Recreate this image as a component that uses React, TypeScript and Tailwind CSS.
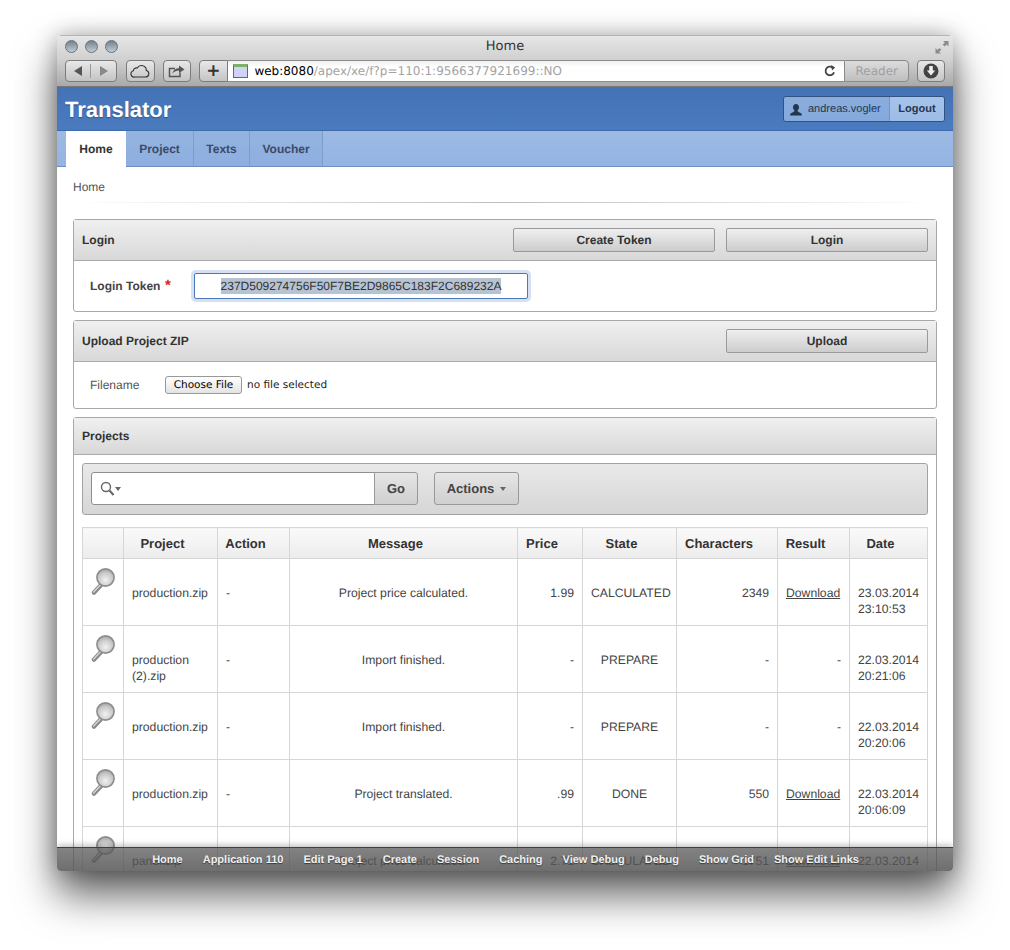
import React from "react";

const sans = "font-['Liberation_Sans',Arial,sans-serif]";
const lucida = "font-['DejaVu_Sans',sans-serif]";

function Mag() {
  return (
    <svg width="26" height="28" viewBox="0 0 26 28" className="block">
      <defs>
        <radialGradient id="lens" cx="50%" cy="65%" r="70%">
          <stop offset="0%" stopColor="#f2f2f2" />
          <stop offset="60%" stopColor="#c9c9c9" />
          <stop offset="100%" stopColor="#9a9a9a" />
        </radialGradient>
      </defs>
      <path d="M3 24.5 L10.5 16.5" stroke="#8a8a8a" strokeWidth="4.5" strokeLinecap="round" />
      <path d="M2.6 24 L10 16.2" stroke="#d4d4d4" strokeWidth="1.4" strokeLinecap="round" />
      <circle cx="14.5" cy="9.5" r="8.6" fill="url(#lens)" stroke="#8c8c8c" strokeWidth="1.6" />
    </svg>
  );
}

function Btn({ children }: { children: React.ReactNode }) {
  return (
    <div className="w-[202px] h-6 rounded-[2px] border border-[#9a9a9a] bg-gradient-to-b from-[#efefef] to-[#cdcdcd] flex items-center justify-center text-xs font-bold text-[#333]">
      {children}
    </div>
  );
}

function PanelHead({ title, h, children }: { title: string; h: string; children?: React.ReactNode }) {
  return (
    <div className={`${h} flex items-center justify-between pl-2 pr-2 border-b border-[#ababab] bg-gradient-to-b from-[#f0f0f0] to-[#d8d8d8]`}>
      <span className="text-xs font-bold text-[#333]">{title}</span>
      {children && <div className="flex gap-[11px]">{children}</div>}
    </div>
  );
}

type Row = {
  project: string;
  message: string;
  price: string;
  state: string;
  chars: string;
  result: string;
  date: string;
  time: string;
};

const rows: Row[] = [
  { project: "production.zip", message: "Project price calculated.", price: "1.99", state: "CALCULATED", chars: "2349", result: "Download", date: "23.03.2014", time: "23:10:53" },
  { project: "production (2).zip", message: "Import finished.", price: "-", state: "PREPARE", chars: "-", result: "-", date: "22.03.2014", time: "20:21:06" },
  { project: "production.zip", message: "Import finished.", price: "-", state: "PREPARE", chars: "-", result: "-", date: "22.03.2014", time: "20:20:06" },
  { project: "production.zip", message: "Project translated.", price: ".99", state: "DONE", chars: "550", result: "Download", date: "22.03.2014", time: "20:06:09" },
  { project: "panel.zip", message: "Project price calculated.", price: "2.71", state: "CALCULATED", chars: "1751", result: "Download", date: "22.03.2014", time: "19:40:12" },
];

const th = "border border-[#d6d6d6] font-bold text-[13px] text-[#333] bg-gradient-to-b from-[#fafafa] to-[#ececec] h-[31px] p-0 pt-px pr-4";
const td = "border border-[#d6d6d6] align-top pt-[26px] px-2 text-[12.2px] leading-4 text-[#444] h-[67px]";

export default function App() {
  return (
    <div className={`w-[1010px] h-[950px] bg-white pt-[35px] pl-[57px] overflow-hidden [text-rendering:geometricPrecision] ${sans}`}>
      <div className="relative w-[896px] h-[836px] rounded-t-[5px] rounded-b-[4px] overflow-hidden bg-white shadow-[0_24px_42px_rgba(0,0,0,0.62),0_0_22px_rgba(0,0,0,0.28)]">
        <div className="absolute inset-0 flex flex-col">
          {/* Browser chrome */}
          <div className="h-[52px] shrink-0 bg-gradient-to-b from-[#e6e6e6] via-[#cfcfcf] to-[#a9a9a9] border-t border-[#b5b5b5] border-b border-b-[#777] relative">
            <div className="absolute left-2 top-[4px] flex gap-[7px]">
              {[0, 1, 2].map((i) => (
                <span key={i} className="w-[13px] h-[13px] rounded-full border border-[#66727d] bg-gradient-to-b from-[#74828e] to-[#c2ced6]" />
              ))}
            </div>
            <div className={`absolute inset-x-0 top-[3px] text-center text-[13px] leading-4 text-[#333] ${lucida}`}>Home</div>
            <svg width="16" height="16" viewBox="0 0 16 16" className="absolute right-[3px] top-[3px]">
              <path d="M9 2h5.500v5.500L12.600 5.600 10.500 7.500 8.700 5.500 10.900 3.800z" fill="#8c8c8c" />
              <path d="M7 14.500H1.500V9l1.900 1.900L5.500 9l1.800 2-2.200 1.700z" fill="#8c8c8c" />
            </svg>
            <div className="absolute left-2 right-2 top-[24px] h-[22px] flex items-center">
              <div className="w-[52px] h-[22px] rounded-[4px] border border-[#7c7c7c] bg-gradient-to-b from-[#e8e8e8] to-[#c4c4c4] flex items-center">
                <span className="flex-1 flex justify-center">
                  <span className="border-y-[5px] border-y-transparent border-r-[8px] border-r-[#555]" />
                </span>
                <span className="w-px h-3.5 bg-[#999]" />
                <span className="flex-1 flex justify-center">
                  <span className="border-y-[5px] border-y-transparent border-l-[8px] border-l-[#888]" />
                </span>
              </div>
              <div className="ml-[9px] w-[29px] h-[22px] rounded-[4px] border border-[#7c7c7c] bg-gradient-to-b from-[#e8e8e8] to-[#c4c4c4] flex items-center justify-center">
                <svg width="20" height="14" viewBox="0 0 20 14">
                  <path d="M5 13h10.500a3.300 3.300 0 0 0 .8-6.500A4.800 4.800 0 0 0 7.300 4 3.200 3.200 0 0 0 3.300 6.800 3.200 3.200 0 0 0 5 13z" fill="none" stroke="#333" strokeWidth="1.100" />
                </svg>
              </div>
              <div className="ml-[8px] w-[28px] h-[22px] rounded-[4px] border border-[#7c7c7c] bg-gradient-to-b from-[#e8e8e8] to-[#c4c4c4] flex items-center justify-center">
                <svg width="18" height="14" viewBox="0 0 18 14">
                  <path d="M12 8.500V12.500H1.500V4.500H7" fill="none" stroke="#555" strokeWidth="1.500" />
                  <path d="M4.500 9.500C5 6 8 4.300 11 4.300V1.500L16.500 5.500 11 9V6.500C8.500 6.500 6.500 7.300 4.500 9.500z" fill="#555" />
                </svg>
              </div>
              <div className="ml-[8px] w-[30px] h-[22px] rounded-l-[4px] border border-[#7c7c7c] bg-gradient-to-b from-[#e8e8e8] to-[#c4c4c4] flex items-center justify-center">
                <span className={`text-[17px] leading-none font-bold text-[#333] ${lucida}`}>+</span>
              </div>
              <div className="w-[619px] h-[22px] border-y border-[#8a8a8a] bg-gradient-to-b from-[#f0f0f0] to-white to-30% flex items-center pl-[5px]">
                <span className="w-[15px] h-[14px] border border-[#666] border-t-[3px] border-t-[#7fb069] bg-[#cfd3f5] shrink-0" />
                <span className={`ml-[6px] text-[12px] whitespace-nowrap ${lucida}`}>
                  <span className="text-black">web:8080</span>
                  <span className="text-[#a3a3a3]">/apex/xe/f?p=110:1:9566377921699::NO</span>
                </span>
                <svg width="14" height="14" viewBox="0 0 14 14" className="ml-auto mr-[7px]">
                  <path d="M11 8.200A4.300 4.300 0 1 1 9.600 3.600" fill="none" stroke="#444" strokeWidth="1.800" />
                  <path d="M8 1l4.200 2.600L9 6.500z" fill="#444" />
                </svg>
              </div>
              <div className={`w-[65px] h-[22px] rounded-r-[4px] border border-[#8a8a8a] bg-gradient-to-b from-[#dcdcdc] to-[#bfbfbf] flex items-center justify-center text-xs text-[#a0a0a0] ${lucida}`}>
                Reader
              </div>
              <div className="ml-[8px] w-[28px] h-[22px] rounded-[4px] border border-[#7c7c7c] bg-gradient-to-b from-[#e8e8e8] to-[#c4c4c4] flex items-center justify-center">
                <svg width="16" height="16" viewBox="0 0 16 16">
                  <circle cx="8" cy="8" r="7.500" fill="#444" />
                  <path d="M6.200 3h3.600v4.500h2.400L8 12.500 3.800 7.500h2.400z" fill="#eee" />
                </svg>
              </div>
            </div>
          </div>

          {/* App header */}
          <div className="h-11 shrink-0 pt-px bg-gradient-to-b from-[#4372b5] to-[#4b7bbf] border-b border-[#3d6aa8] flex items-center justify-between pl-2 pr-2">
            <span className="text-[22px] font-bold text-white [text-shadow:0_1px_1px_rgba(0,0,0,0.35)]">Translator</span>
            <div className="h-[26px] flex rounded-[3px] border border-[#34527f] overflow-hidden text-[11px] pt-0">
              <div className="w-[105px] flex items-center pl-[5px] pt-px bg-gradient-to-b from-[#8aaddd] to-[#84a9dc] text-[#26354d]">
                <svg width="14" height="14" viewBox="0 0 14 14" className="mr-[5px]">
                  <path d="M7 1c1.900 0 3 1.300 3 3.200 0 1.300-.6 2.500-1.400 3.100-.2.900.2 1.400 1.400 1.900 1.500.6 3 1.100 3 3.300H1c0-2.200 1.500-2.700 3-3.300 1.200-.5 1.600-1 1.400-1.900C4.600 6.700 4 5.500 4 4.200 4 2.300 5.100 1 7 1z" fill="#26354d" />
                </svg>
                andreas.vogler
              </div>
              <div className="w-[55px] flex items-center justify-center pt-px border-l border-[#6f95c9] bg-gradient-to-b from-[#a6c3ea] to-[#9dbce6] font-bold text-[#26354d]">
                Logout
              </div>
            </div>
          </div>

          {/* Nav tabs */}
          <div className="h-9 shrink-0 bg-gradient-to-b from-[#9ebae4] to-[#93b4e3] border-b border-[#6f8fbf] flex pl-[9px] text-xs font-bold text-[#3c4a66]">
            <div className="w-[60px] h-9 bg-white flex items-center justify-center text-[#333]">Home</div>
            <div className="w-[68px] h-[35px] border-x border-[#7d9dcb] border-l-0 flex items-center justify-center bg-gradient-to-b from-[#94b3e0] to-[#8dafe0]">Project</div>
            <div className="w-[56px] h-[35px] border-r border-[#7d9dcb] flex items-center justify-center bg-gradient-to-b from-[#94b3e0] to-[#8dafe0]">Texts</div>
            <div className="w-[73px] h-[35px] border-r border-[#7d9dcb] flex items-center justify-center bg-gradient-to-b from-[#94b3e0] to-[#8dafe0]">Voucher</div>
          </div>

          {/* Content */}
          <div className="flex-1 min-h-0 px-4">
            <div className="h-[35px] pt-[13px] text-xs leading-[14px] text-[#555]">Home</div>
            <div className="h-px mb-[16px] bg-gradient-to-r from-transparent via-[#bdbdbd] to-transparent" />

            <div className="rounded-[3px] border border-[#a8a8a8] mb-2">
              <PanelHead title="Login" h="h-[41px]">
                <Btn>Create Token</Btn>
                <Btn>Login</Btn>
              </PanelHead>
              <div className="h-[50px] flex items-center pl-4">
                <span className="w-[75px] text-xs font-bold text-[#444]">Login Token</span>
                <span className="w-[29px] text-[15px] font-bold text-[#d22]">*</span>
                <div className="w-[334px] h-[26px] rounded-[2px] border border-[#4a78b5] shadow-[0_0_0_3px_#d5e1f2] bg-white flex items-center justify-center text-xs text-[#333]">
                  <span className="bg-[#b6c3d3]">237D509274756F50F7BE2D9865C183F2C689232A</span>
                </div>
              </div>
            </div>

            <div className="rounded-[3px] border border-[#a8a8a8] mb-2">
              <PanelHead title="Upload Project ZIP" h="h-[41px]">
                <Btn>Upload</Btn>
              </PanelHead>
              <div className="h-[46px] flex items-center pl-4">
                <span className="w-[75px] text-xs text-[#555]">Filename</span>
                <div className={`w-[77px] h-[18px] pt-[2px] rounded-[3px] border border-[#999] bg-gradient-to-b from-white to-[#e4e4e4] flex items-center justify-center text-[10.5px] text-black ${lucida}`}>
                  Choose File
                </div>
                <span className={`ml-[5px] pt-[2px] text-[10.5px] text-[#222] ${lucida}`}>no file selected</span>
              </div>
            </div>

            <div className="rounded-t-[3px] border border-[#a8a8a8]">
              <PanelHead title="Projects" h="h-[37px]" />
              <div className="p-2">
                <div className="h-[52px] pb-px rounded-[3px] border border-[#a3a3a3] bg-gradient-to-b from-[#e9e9e9] to-[#d6d6d6] flex items-center pl-2">
                  <div className="w-[284px] h-[33px] rounded-l-[3px] border border-[#8f8f8f] bg-white flex items-center pl-2">
                    <svg width="14" height="15" viewBox="0 0 14 15">
                      <circle cx="6" cy="6" r="4.500" fill="none" stroke="#666" strokeWidth="1.400" />
                      <path d="M9.500 9.500L13.500 14" stroke="#666" strokeWidth="2" />
                    </svg>
                    <span className="ml-[1px] border-x-[3px] border-x-transparent border-t-[4px] border-t-[#666]" />
                  </div>
                  <div className="w-[44px] h-[33px] pt-px -ml-px rounded-r-[3px] border border-[#999] bg-gradient-to-b from-[#e6e6e6] to-[#cfcfcf] flex items-center justify-center text-[13px] font-bold text-[#444]">Go</div>
                  <div className="w-[85px] h-[33px] pt-px ml-4 rounded-[3px] border border-[#999] bg-gradient-to-b from-[#e6e6e6] to-[#cfcfcf] flex items-center justify-center text-[13px] font-bold text-[#444]">
                    Actions
                    <span className="ml-[6px] border-x-[3px] border-x-transparent border-t-[4px] border-t-[#666]" />
                  </div>
                </div>

                <table className="mt-3 w-[845px] table-fixed border-collapse">
                  <colgroup>
                    <col className="w-[41px]" />
                    <col className="w-[94px]" />
                    <col className="w-[72px]" />
                    <col className="w-[228px]" />
                    <col className="w-[65px]" />
                    <col className="w-[94px]" />
                    <col className="w-[101px]" />
                    <col className="w-[72px]" />
                    <col className="w-[78px]" />
                  </colgroup>
                  <thead>
                    <tr>
                      <th className={th}></th>
                      <th className={th}>Project</th>
                      <th className={th}>Action</th>
                      <th className={th}>Message</th>
                      <th className={th}>Price</th>
                      <th className={th}>State</th>
                      <th className={th}>Characters</th>
                      <th className={th}>Result</th>
                      <th className={th}>Date</th>
                    </tr>
                  </thead>
                  <tbody>
                    {rows.map((r, i) => (
                      <tr key={i}>
                        <td className="border border-[#d6d6d6] align-top pt-[9px] pl-[8px] h-[67px]">
                          <Mag />
                        </td>
                        <td className={td}>{r.project}</td>
                        <td className={td}>-</td>
                        <td className={`${td} text-center`}>{r.message}</td>
                        <td className={`${td} text-right`}>{r.price}</td>
                        <td className={`${td} text-center`}>{r.state}</td>
                        <td className={`${td} text-right`}>{r.chars}</td>
                        <td className={`${td} ${r.result === "-" ? "text-right" : "text-left underline"}`}>{r.result}</td>
                        <td className={td}>
                          {r.date}
                          <br />
                          {r.time}
                        </td>
                      </tr>
                    ))}
                  </tbody>
                </table>
              </div>
            </div>
          </div>
        </div>

        {/* Developer toolbar overlay */}
        <div className="absolute left-0 right-0 bottom-0 h-6 pt-px border-t border-[#3f3f3f] shadow-[0_-2px_6px_rgba(0,0,0,0.25)] bg-gradient-to-b from-[#555555bb] to-[#555555d9] flex items-center justify-center gap-5 pl-px text-[11px] font-bold text-[#f0f0f0] [text-shadow:0_1px_1px_rgba(0,0,0,0.5)]">
          {["Home", "Application 110", "Edit Page 1", "Create", "Session", "Caching", "View Debug", "Debug", "Show Grid", "Show Edit Links"].map((t) => (
            <span key={t}>{t}</span>
          ))}
        </div>
      </div>
    </div>
  );
}
